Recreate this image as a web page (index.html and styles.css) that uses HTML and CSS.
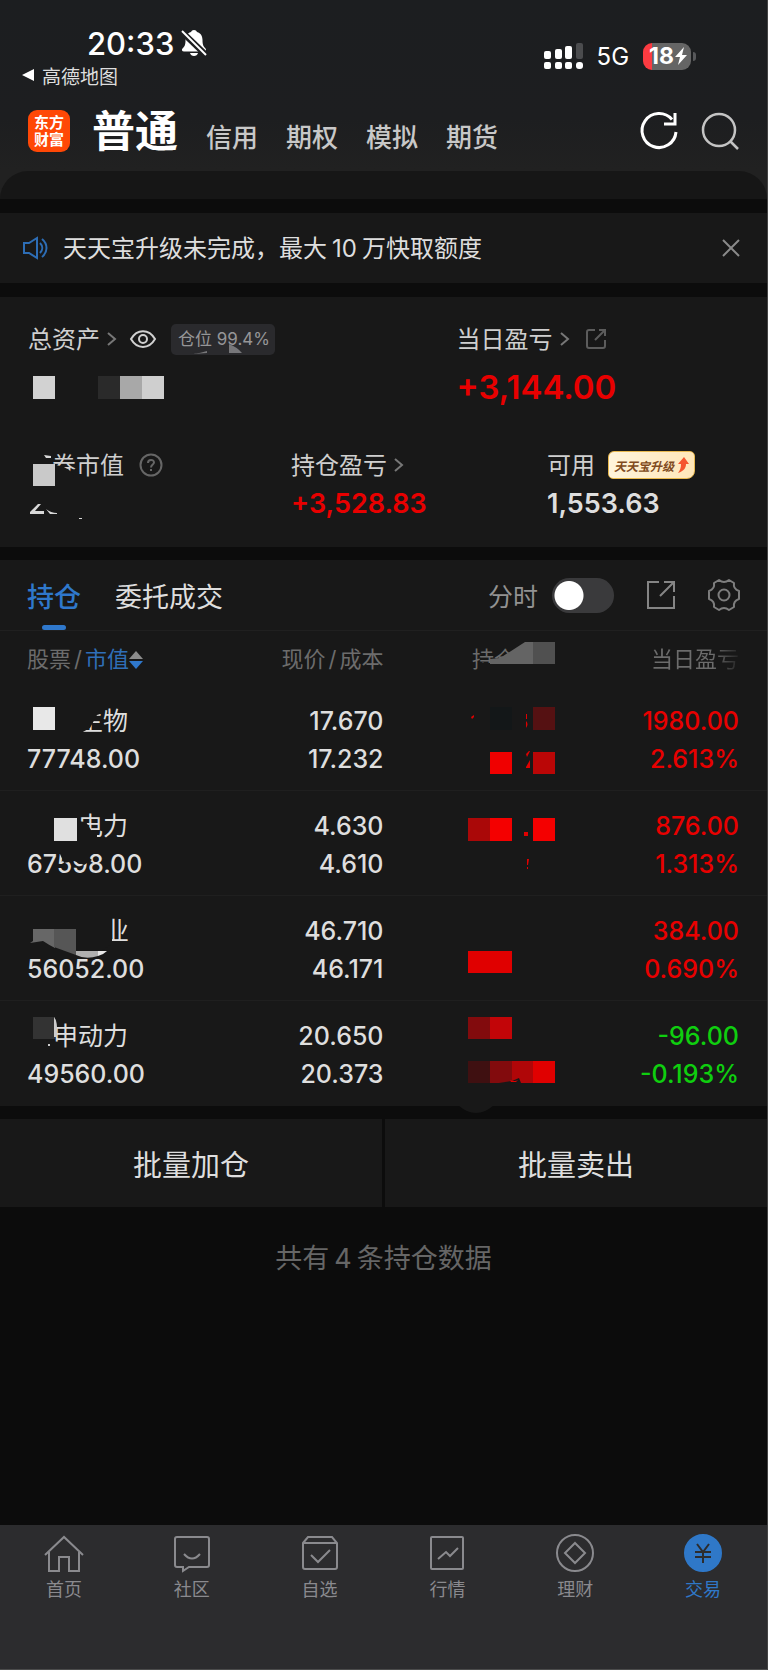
FILE: index.html
```html
<!DOCTYPE html>
<html lang="zh-CN">
<head>
<meta charset="utf-8">
<meta name="viewport" content="width=device-width, initial-scale=1">
<title>交易</title>
<link rel="stylesheet" href="styles.css">
</head>
<body>
<header class="top">
  <div class="status">
    <div class="status-left">
      <div class="clock"><span>20:33</span>
        <svg class="bell" viewBox="0 0 26 28" width="26" height="28"><path fill="#fff" d="M13 1c-1.500 0-2.500.8-3 2C6 4 4.500 7.500 4.500 11c0 5-1 6.500-3 8.500-1.200 1.500-.5 3 1.500 3h20c2 0 2.500-1.500 1.500-3-2-2-3-3.500-3-8.500 0-3.500-1.500-7-5.500-8-.5-1.200-1.500-2-3-2zM9 24h8c-.5 2-2 3-4 3s-3.500-1-4-3z"/><path stroke="#1d1e20" stroke-width="6" d="M1 3l24 23"/><path stroke="#fff" stroke-width="2" d="M1 2l24 24"/></svg>
      </div>
      <a class="back" href="#"><svg viewBox="0 0 12 12" width="12" height="12"><path fill="#fff" d="M0 6L12 0v12z"/></svg>高德地图</a>
    </div>
    <div class="status-right">
      <svg viewBox="0 0 39 27" width="39" height="27" fill="#fff"><rect x="0" y="8" width="7" height="8" rx="2"/><rect x="11" y="6" width="7" height="10" rx="2"/><rect x="21" y="3" width="7" height="13" rx="2"/><rect x="32" y="0" width="7" height="16" rx="2" fill="#4b4c4e"/><rect x="0" y="19" width="7" height="7" rx="2"/><rect x="11" y="19" width="7" height="7" rx="2"/><rect x="21" y="19" width="7" height="7" rx="2"/><rect x="32" y="19" width="7" height="7" rx="3"/></svg>
      <span class="net">5G</span>
      <span class="battery"><span class="cell">18<svg viewBox="0 0 12 18" width="12" height="18"><path fill="#fff" d="M9 0L0 10h5L3 18l9-10H7z"/></svg></span><span class="cap"></span></span>
    </div>
  </div>
  <div class="appbar">
    <div class="logo">东方<br>财富</div>
    <nav class="modes">
      <a class="mode-on" href="#">普通</a>
      <a href="#">信用</a>
      <a href="#">期权</a>
      <a href="#">模拟</a>
      <a href="#">期货</a>
    </nav>
    <div class="tools">
      <button class="icon" aria-label="刷新"><svg viewBox="0 0 38 38" width="38" height="38" fill="none" stroke="#fff" stroke-width="3"><path d="M36 20a17 17 0 1 1-4-12.500"/><path d="M35 1v11H24"/></svg></button>
      <button class="icon" aria-label="搜索"><svg viewBox="0 0 38 38" width="38" height="38" fill="none" stroke="#c4c4c4" stroke-width="2.500"><circle cx="18" cy="18" r="16"/><path d="M29 29l8 8"/></svg></button>
    </div>
  </div>
  <div class="sheet"></div>
</header>

<main class="main">
  <section class="notice">
    <svg viewBox="0 0 25 22" width="25" height="22" fill="none" stroke="#2d6db5" stroke-width="2"><path d="M1 6h5l8-5v20l-8-5H1z"/><path d="M17 6c3 3 3 7 0 10M19 2c6 5 6 13 0 18"/></svg>
    <p>天天宝升级未完成，最大<span class="num">10</span>万快取额度</p>
    <button class="icon" aria-label="关闭"><svg viewBox="0 0 16 16" width="16" height="16" stroke="#8a8a8a" stroke-width="2"><path d="M0 0l16 16M16 0L0 16"/></svg></button>
  </section>

  <section class="assets">
    <div class="row two">
      <div class="stat">
        <div class="label"><span>总资产</span><svg class="chev" viewBox="0 0 9 14" width="9" height="14"><path d="M1 1l7 6-7 6"/></svg>
          <svg class="eye" viewBox="0 0 26 18" width="26" height="18" fill="none" stroke="#d0d0d0" stroke-width="2"><path d="M1 9c6-10.500 18-10.500 24 0-6 10.500-18 10.500-24 0z"/><circle cx="13" cy="9" r="4"/></svg>
          <div class="ratio">仓位 99.4%<svg class="over" viewBox="0 0 105 31" width="105" height="31"><path fill="#2a2a2d" d="M44 22h50v7H20z"/><path fill="#77777a" d="M58 20q8 3 13 9H58zM22 30q8-1 14-3v2z"/></svg></div>
        </div>
        <div class="big"><svg viewBox="0 0 132 23" width="132" height="23"><path fill="#d2d2d2" d="M0 0h22v23H0z"/><path fill="#2a2a2a" d="M65 0h22v23H65z"/><path fill="#a8a8a8" d="M87 0h22v23H87z"/><path fill="#cfcfcf" d="M109 0h22v23h-22z"/></svg></div>
      </div>
      <div class="stat">
        <div class="label"><span>当日盈亏</span><svg class="chev" viewBox="0 0 9 14" width="9" height="14"><path d="M1 1l7 6-7 6"/></svg>
          <svg class="share" viewBox="0 0 20 20" width="20" height="20" fill="none" stroke="#5c5c5c" stroke-width="2"><path d="M9 1H3Q1 1 1 3v14q0 2 2 2h14q2 0 2-2v-6M13 1h6v6M19 1L9 11"/></svg>
        </div>
        <div class="big up">+3,144.00</div>
      </div>
    </div>
    <div class="row three">
      <div class="stat">
        <div class="label"><span class="indent">券市值</span><svg class="help" viewBox="0 0 24 24" width="24" height="24" fill="none" stroke="#666" stroke-width="2"><circle cx="12" cy="12" r="10.500"/><path d="M9 10c0-4 6-4 6-.5 0 2-3 2-3 5M12 16v2"/></svg></div>
        <svg class="over" viewBox="0 0 60 75" width="60" height="75"><path fill="#181818" d="M22 18l6 0 8 2 8 5 2 6H22z"/><path fill="#c9c9c9" d="M5 17h22v22H5z"/><path fill="#d8d8d8" d="M16 8l7 1v2h-5zM2 67v-2l8-8h3l-6 7h9v3zM18 62q5 4 11 4v1h-7zM51 71h3v1h-3z"/></svg>
      </div>
      <div class="stat">
        <div class="label"><span>持仓盈亏</span><svg class="chev" viewBox="0 0 9 14" width="9" height="14"><path d="M1 1l7 6-7 6"/></svg></div>
        <div class="mid up">+3,528.83</div>
      </div>
      <div class="stat">
        <div class="label"><span>可用</span><a class="promo" href="#">天天宝升级<svg viewBox="0 0 12 16" width="12" height="16"><path fill="#f5552e" d="M7 0l5 7H9c0 4-2 7-8 9 2-3 3-5 3-9H1z"/></svg></a></div>
        <div class="mid">1,553.63</div>
      </div>
    </div>
  </section>

  <section class="holdings">
    <div class="tabs">
      <button class="tab tab-on">持仓</button>
      <button class="tab">委托成交</button>
      <label class="minute" for="minute">分时<input id="minute" type="checkbox" role="switch"></label>
      <button class="icon" aria-label="分享"><svg viewBox="0 0 28 28" width="28" height="28" fill="none" stroke="#858585" stroke-width="2"><path d="M12 1H1v26h26V15M17 1h10v10M27 1L13 15"/></svg></button>
      <button class="icon" aria-label="设置"><svg viewBox="0 0 32 32" width="32" height="32" fill="none" stroke="#7d7d7d" stroke-width="2" stroke-linejoin="round"><path d="M11 1q5 4 10 0l5 3q-1 6 5 8v8q-6 2-5 8l-5 3q-5-4-10 0l-5-3q1-6-5-8v-8q6-2 5-8z"/><circle cx="16" cy="16" r="5.500"/></svg></button>
    </div>
    <table class="grid">
      <thead>
        <tr>
          <th class="c1">股票<i>/</i><span class="sorted">市值</span><svg class="sort" viewBox="0 0 14 18" width="14" height="18"><path fill="#8c8c8c" d="M7 0l7 8H0z"/><path fill="#2f78cc" d="M0 10h14l-7 8z"/></svg></th>
          <th class="c2">现价<i>/</i>成本</th>
          <th class="c3"><span class="hold">持仓</span><svg class="mosaic" viewBox="-1 0 100 56" width="100" height="56"><path fill="#181818" d="M19 32h50v10H19z"/><path fill="#646464" d="M29 33V28l10-1 25-16h9v22z"/><path fill="#505050" d="M72 11h22v22H72z"/></svg></th>
          <th class="c4"><span class="fade">当日盈亏</span></th>
        </tr>
      </thead>
      <tbody>
        <tr>
          <td class="c1"><span class="n2">生物</span><br>77748.00<svg class="mask" viewBox="0 0 150 104" width="150" height="104"><path fill="#181818" d="M20 17h83v10l-6 2-7 13-9 5H20z"/><path fill="#e8e8e8" d="M33 21h22v23H33z"/></svg></td>
          <td class="c2">17.670<br>17.232</td>
          <td class="c3"><svg class="mosaic" viewBox="-1 0 100 104" width="100" height="104"><path fill="#131718" d="M29 21h22v23H29z"/><path fill="#551112" d="M72 21h22v23H72z"/><path fill="#f00000" d="M29 66h22v22H29z"/><path fill="#ba0606" d="M72 66h22v22H72z"/><path fill="#e00000" d="M10 31l3-2v2l-2 2zM65 28h1v5h-1zM65 35q3 3 0 7zM65 68l3-3h1l-3 6zM65 81l4-7v8h-4z"/></svg></td>
          <td class="c4 up">1980.00<br>2.613%</td>
        </tr>
        <tr>
          <td class="c1"><span class="n2">电力</span><br>67598.00<svg class="mask" viewBox="0 0 150 104" width="150" height="104"><path fill="#181818" d="M77 30l9 1 5 8 6 1v12H77zM60 63h24l8 6-8 5-10-4-10 2z"/><path fill="#e0e0e0" d="M54 27h23v23H54z"/></svg></td>
          <td class="c2">4.630<br>4.610</td>
          <td class="c3"><svg class="mosaic" viewBox="-1 0 100 104" width="100" height="104"><path fill="#aa0808" d="M7 27h22v23H7z"/><path fill="#f40000" d="M29 27h22v23H29zM72 27h22v23H72z"/><path fill="#e00000" d="M63 41h4v4h-4zM66 68h2l-1 6h-1zM66 76h1v2h-1z"/></svg></td>
          <td class="c4 up">876.00<br>1.313%</td>
        </tr>
        <tr>
          <td class="c1"><span class="n3">业</span><br>56052.00<svg class="mask" viewBox="0 0 150 104" width="150" height="104"><path fill="#181818" d="M54 20h58v28l-14 9H54z"/><path fill="#676767" d="M33 33h22v19q-6-3-12-7l-13 2 3-2z"/><path fill="#565656" d="M54 33h22v26l-22-8z"/><path fill="#b0b0b0" d="M76 55h22v5q-12 4-22-1z"/><path fill="#e8e8e8" d="M98 55h9q-4 4-9 5z"/></svg></td>
          <td class="c2">46.710<br>46.171</td>
          <td class="c3"><svg class="mosaic" viewBox="-1 0 100 104" width="100" height="104"><path fill="#e00000" d="M7 55h44v22H7z"/></svg></td>
          <td class="c4 up">384.00<br>0.690%</td>
        </tr>
        <tr>
          <td class="c1"><span class="n1">申动力</span><br>49560.00<svg class="mask" viewBox="0 0 150 104" width="150" height="104"><path fill="#333" d="M33 16h22v22H33z"/><path fill="#ccc" d="M54 16q4 4 3 20h-3zM48 43h2v2h-2z"/></svg></td>
          <td class="c2">20.650<br>20.373</td>
          <td class="c3"><svg class="mosaic" viewBox="-1 0 100 115" width="100" height="115"><path fill="#181818" d="M-3 104h36q-18 16-36 0z"/><path fill="#820b0d" d="M7 16h22v22H7zM29 60h22v20l-13 2h-9z"/><path fill="#c20508" d="M29 16h22v22H29z"/><path fill="#3f1011" d="M7 60h22v22H7z"/><path fill="#b00608" d="M51 60h21v22H60l-2-5-7 3z"/><path fill="#e00000" d="M72 60h22v22H72zM49 79q5 2 8 0l-2 2h-5z"/></svg></td>
          <td class="c4 down">-96.00<br>-0.193%</td>
        </tr>
      </tbody>
    </table>
  </section>

  <div class="batch">
    <button>批量加仓</button>
    <button>批量卖出</button>
  </div>
  <p class="count">共有<span class="num">4</span>条持仓数据</p>
</main>

<nav class="dock">
  <a href="#"><svg viewBox="0 0 40 40" width="40" height="40"><path d="M1 20L20 2l19 18M5 17v19h10V22h10v14h10V17"/></svg>首页</a>
  <a href="#"><svg viewBox="0 0 40 40" width="40" height="40"><path d="M5 2h30q2 0 2 2v26q0 2-2 2H17l-6 4v-4H5q-2 0-2-2V4q0-2 2-2zM12 19q8 9 16 0"/></svg>社区</a>
  <a href="#"><svg viewBox="0 0 40 40" width="40" height="40"><path d="M3 8l5-6h24l5 6v24q0 2-2 2H5q-2 0-2-2zM3 8h34M11 20l7 7 12-12"/></svg>自选</a>
  <a href="#"><svg viewBox="0 0 40 40" width="40" height="40"><path d="M5 2h30q1 0 1 1v30q0 1-1 1H5q-1 0-1-1V3q0-1 1-1zM11 24l8-7 4 4 8-8"/></svg>行情</a>
  <a href="#"><svg viewBox="0 0 40 40" width="40" height="40"><circle cx="20" cy="18" r="18"/><path d="M20 8l10 10-10 10-10-10z"/></svg>理财</a>
  <a class="dock-on" href="#"><svg viewBox="0 0 40 40" width="40" height="40"><circle cx="20" cy="18" r="18" fill="#2f78c8" stroke="#2f78c8"/><path stroke="#2c2c2e" d="M14 9l6 8 6-8M20 17v11M12 17h16M12 22h16"/></svg>交易</a>
</nav>
</body>
</html>
```
FILE: styles.css
```css
* { box-sizing: border-box; }

body {
  margin: 0;
  min-height: 100vh;
  display: flex;
  flex-direction: column;
  background: #0c0c0c;
  border-right: 1px solid #444;
  color: #dedede;
  font-family: Inter, "Noto Sans CJK SC", sans-serif;
  font-size: 24px;
}

a { color: inherit; text-decoration: none; }
p { margin: 0; }
svg { display: block; flex: none; overflow: visible; }

button {
  margin: 0;
  padding: 0;
  border: 0;
  background: none;
  color: inherit;
  font: inherit;
}

.top { background: linear-gradient(#1c1e20, #1d1e20 60%, #212121 85%); }

.status {
  display: flex;
  justify-content: space-between;
  height: 91px;
  padding: 25px 71px 0 22px;
}

.clock {
  display: flex;
  align-items: center;
  gap: 7px;
  height: 36px;
  padding-left: 65px;
  color: #fff;
  font-size: 31px;
  font-weight: 500;
}

.back {
  display: flex;
  align-items: center;
  gap: 8px;
  height: 28px;
  font-size: 19px;
}

.status-right {
  display: flex;
  align-items: center;
  gap: 14px;
  height: 62px;
  color: #fff;
}

.battery { display: flex; align-items: center; gap: 2px; }

.cell {
  display: flex;
  align-items: center;
  gap: 1px;
  height: 27px;
  padding: 0 4px 0 6px;
  border-radius: 9px;
  background: linear-gradient(90deg, #fc3b41 9px, #656565 9px);
  font-size: 23px;
  font-weight: 700;
}

.cap { width: 3px; height: 9px; border-radius: 0 3px 3px 0; background: #58595b; }

.appbar {
  display: flex;
  align-items: center;
  height: 80px;
  padding: 0 28px;
}

.logo {
  width: 42px;
  height: 42px;
  padding-top: 4px;
  border-radius: 9px;
  background: #ff4806;
  color: #fff;
  font-size: 15px;
  font-weight: 700;
  line-height: 17px;
  text-align: center;
}

.modes {
  display: flex;
  flex: 1;
  align-items: baseline;
  gap: 28px;
  padding-left: 22px;
  color: #c8c8c8;
  font-size: 26px;
  font-weight: 500;
}

.mode-on { color: #fff; font-size: 43px; font-weight: 700; line-height: 60px; }
.tools { display: flex; gap: 23px; }

.sheet { height: 28px; border-radius: 30px 30px 0 0; background: #161616; }

.main { flex: 1; padding-top: 14px; }

.notice {
  display: flex;
  align-items: center;
  height: 70px;
  padding: 0 28px 0 23px;
  background: #181818;
}

.notice p { flex: 1; padding: 0 0 3px 15px; }
.num { padding: 0 5px; }

.assets {
  display: grid;
  gap: 40px;
  margin: 14px 0 13px;
  padding: 24px 0 25px 28px;
  background: #181818;
}

.row { display: grid; }
.two { grid-template-columns: 58fr 42fr; }
.three { grid-template-columns: 263fr 256fr 220fr; }
.stat { position: relative; }

.label {
  display: flex;
  align-items: center;
  height: 36px;
  color: #cfcfcf;
  white-space: nowrap;
}

.label > span { padding-bottom: 3px; }
.label .indent { padding-left: 24px; }

.chev { margin-left: 7px; fill: none; stroke: #777; stroke-width: 2; }
.eye { margin-left: 14px; }
.share { margin-left: 17px; }
.help { margin-left: 15px; }

.ratio {
  position: relative;
  margin-left: 15px;
  padding: 0 5px 0 7px;
  border-radius: 5px;
  background: #2a2a2d;
  color: #969698;
  font-size: 17px;
  line-height: 31px;
}

.over { position: absolute; top: 0; left: 0; }

.big {
  display: flex;
  align-items: center;
  height: 40px;
  margin-top: 10px;
  font-size: 33px;
  font-weight: 600;
}

.big svg { margin-left: 5px; }

.mid { margin-top: 3px; font-size: 27px; font-weight: 600; line-height: 36px; }
.up { color: #e80000; }
.down { color: #0fce0f; }

.promo {
  display: flex;
  align-items: center;
  gap: 3px;
  height: 28px;
  margin-left: 13px;
  padding: 0 5px;
  border: 1px solid #e8b84e;
  border-radius: 6px 5px 8px 5px;
  background: linear-gradient(90deg, #fff4dc, #ffe6b8);
  color: #804a20;
  font-size: 12px;
  font-style: italic;
  font-weight: 700;
}

.holdings { background: #181818; }

.tabs {
  display: flex;
  align-items: center;
  height: 71px;
  padding: 0 27px;
  border-bottom: 1px solid #202020;
}

.tab {
  position: relative;
  height: 70px;
  margin-right: 34px;
  font-size: 27px;
}

.tab-on { color: #2f78cc; font-weight: 500; }

.tab-on::after {
  content: "";
  position: absolute;
  bottom: 0;
  left: 50%;
  width: 24px;
  height: 5px;
  margin-left: -12px;
  border-radius: 3px;
  background: #2f78cc;
}

.minute {
  display: flex;
  align-items: center;
  gap: 14px;
  margin-left: auto;
  color: #929292;
  font-size: 25px;
}

.minute input {
  appearance: none;
  width: 62px;
  height: 35px;
  margin: 0;
  border-radius: 18px;
  background: radial-gradient(circle at 17px 50%, #fff 14px, #3a3a3c 15px);
}

.tabs .icon { margin-left: 33px; }

.grid {
  width: 100%;
  border-collapse: separate;
  border-spacing: 0;
  table-layout: fixed;
}

.grid th, .grid td {
  position: relative;
  padding: 0;
  text-align: right;
  white-space: nowrap;
}

.grid th {
  height: 55px;
  padding-bottom: 4px;
  color: #6c6c6c;
  font-size: 22px;
  font-weight: 400;
}

.grid td {
  height: 105px;
  padding: 16px 0 12px;
  border-bottom: 1px solid #1f1f1f;
  font-size: 25px;
  font-weight: 500;
  line-height: 38px;
}

.grid tr:last-child td { border-bottom-color: #181818; }
.grid .c1 { width: 26%; padding-left: 27px; text-align: left; }
.grid .c2 { width: 24%; }
.grid .c3 { width: 23%; }
.grid .c4 { width: 27%; padding-right: 28px; }
.grid i { padding: 0 3px; font-style: normal; }
.grid td.up { color: #e80000; }
.grid td.down { color: #0fce0f; }

.sorted { color: #2f6fb8; }
.sort { display: inline-block; vertical-align: -2px; }
.hold { padding-right: 44px; }

.fade {
  background: linear-gradient(90deg, #6c6c6c 70%, #242424);
  background-clip: text;
  color: transparent;
}

.n1, .n2, .n3 { font-weight: 400; line-height: 30px; }
.n1 { padding-left: 26px; }
.n2 { padding-left: 51px; }
.n3 { padding-left: 77px; }

.mask { position: absolute; top: 0; left: 0; }
.mosaic { position: absolute; top: 0; right: 0; }

.batch {
  display: grid;
  grid-template-columns: 1fr 1fr;
  gap: 3px;
  margin-top: 13px;
}

.batch button { height: 88px; background: #181818; font-size: 29px; }

.count {
  padding-top: 32px;
  color: #666;
  font-size: 27px;
  line-height: 40px;
  text-align: center;
}

.dock {
  display: grid;
  grid-template-columns: repeat(6, 1fr);
  height: 145px;
  padding-top: 10px;
  border-bottom: 1px solid #4c4c4c;
  background: #2c2c2e;
  color: #8a8a8e;
  font-size: 18px;
}

.dock a {
  display: flex;
  flex-direction: column;
  align-items: center;
}

.dock svg { fill: none; stroke: #8a8a8e; stroke-width: 2; }
.dock .dock-on { color: #2f78c8; }
```
